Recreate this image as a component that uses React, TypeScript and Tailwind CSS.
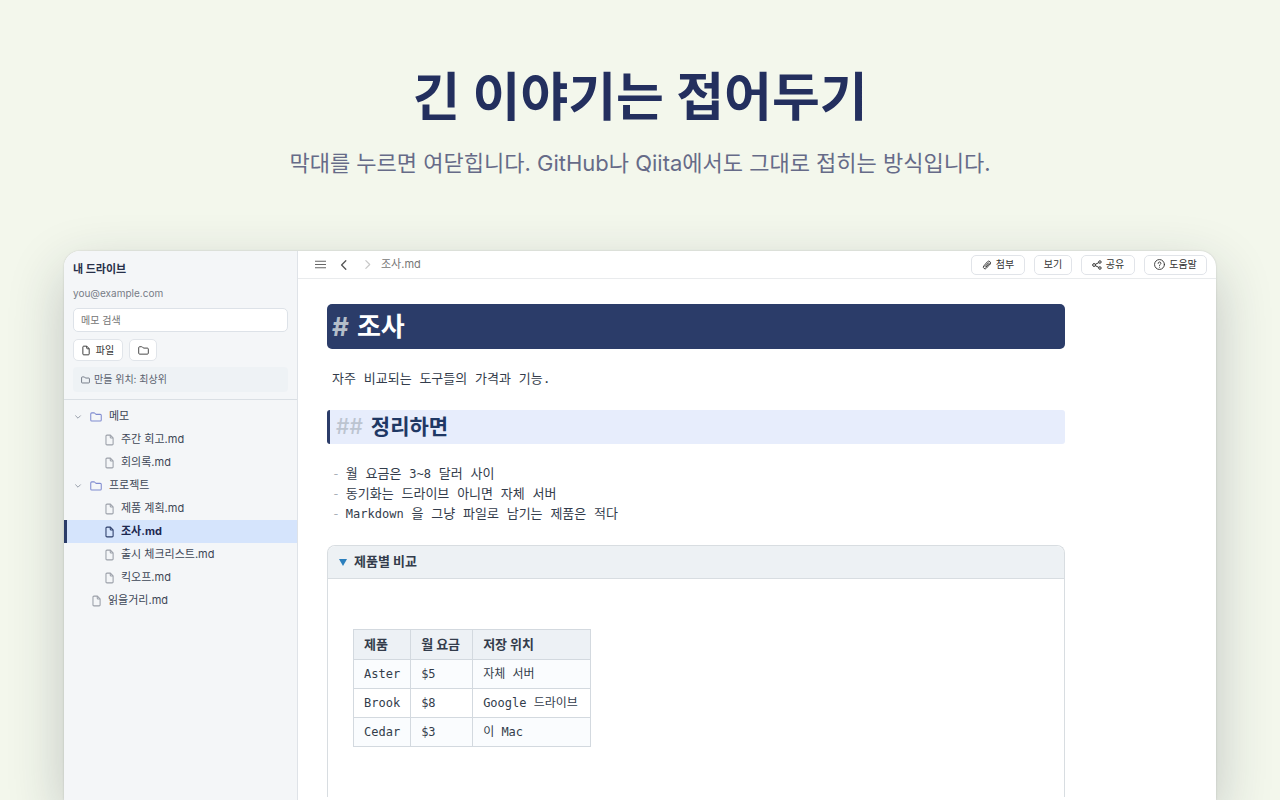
import type { ReactNode } from "react";
import clsx from "clsx";

const FileIcon = ({ className }: { className?: string }) => (
  <svg viewBox="0 0 12 16" className={className} fill="none" stroke="currentColor" strokeWidth="1.4" strokeLinejoin="round" aria-hidden="true">
    <path d="M2.6 1.5h4.6L10.8 5.2v8a1.3 1.3 0 0 1-1.3 1.3H2.6a1.3 1.3 0 0 1-1.3-1.3V2.8a1.3 1.3 0 0 1 1.3-1.3Z" />
    <path d="M7 1.7v2.5a1.2 1.2 0 0 0 1.2 1.2h2.4" />
  </svg>
);

const FolderIcon = ({ className }: { className?: string }) => (
  <svg viewBox="0 0 16 13" className={className} fill="none" stroke="currentColor" strokeWidth="1.4" strokeLinejoin="round" aria-hidden="true">
    <path d="M1 10.4V2.4A1.4 1.4 0 0 1 2.4 1h2.9c.5 0 .9.2 1.2.5l.9 1c.3.3.7.5 1.1.5h5.1A1.4 1.4 0 0 1 15 4.4v6a1.4 1.4 0 0 1-1.4 1.4H2.4A1.4 1.4 0 0 1 1 10.4Z" />
  </svg>
);

const Chevron = ({ d, className }: { d: string; className?: string }) => (
  <svg viewBox="0 0 10 10" className={className} fill="none" stroke="currentColor" strokeWidth="1.1" strokeLinecap="round" strokeLinejoin="round" aria-hidden="true">
    <path d={d} />
  </svg>
);

const ClipIcon = () => (
  <svg viewBox="0 0 12 12" className="size-2.5" fill="none" stroke="currentColor" strokeWidth="1.1" strokeLinecap="round" aria-hidden="true">
    <path d="M9.4 5.2 5.3 9.8a2 2 0 0 1-3.2-2.6L6.4 2.2a2.2 2.2 0 0 1 3.4 2.9" />
    <path d="M3.6 7.9 7.7 3.3M4.7 8.6l3.9-4.5" />
  </svg>
);

const ShareIcon = () => (
  <svg viewBox="0 0 12 12" className="size-2.5" fill="none" stroke="currentColor" strokeWidth="1.2" aria-hidden="true">
    <circle cx="2.5" cy="6" r="1.7" />
    <circle cx="9.5" cy="2.4" r="1.5" />
    <circle cx="9.5" cy="9.6" r="1.5" />
    <path d="M4 5.2 8.2 3.1M4 6.8l4.2 2.1" />
  </svg>
);

const HelpIcon = () => (
  <svg viewBox="0 0 12 12" className="size-[11px]" fill="none" stroke="currentColor" strokeWidth="1" strokeLinecap="round" aria-hidden="true">
    <circle cx="6" cy="6" r="5.4" />
    <path d="M4.5 4.8a1.5 1.5 0 1 1 2.3 1.2c-.5.3-.8.6-.8 1.1M6 8.9v.1" />
  </svg>
);

type Item = { name: string; kind: "folder" | "file"; depth: number; active?: boolean };

const tree: Item[] = [
  { name: "메모", kind: "folder", depth: 0 },
  { name: "주간 회고.md", kind: "file", depth: 1 },
  { name: "회의록.md", kind: "file", depth: 1 },
  { name: "프로젝트", kind: "folder", depth: 0 },
  { name: "제품 계획.md", kind: "file", depth: 1 },
  { name: "조사.md", kind: "file", depth: 1, active: true },
  { name: "출시 체크리스트.md", kind: "file", depth: 1 },
  { name: "킥오프.md", kind: "file", depth: 1 },
  { name: "읽을거리.md", kind: "file", depth: 0 },
];

const products = [
  { name: "Aster", price: "$5", place: "자체 서버" },
  { name: "Brook", price: "$8", place: "Google 드라이브" },
  { name: "Cedar", price: "$3", place: "이 Mac" },
];

function Latin({ children }: { children: ReactNode }) {
  return <span className="text-[12px]">{children}</span>;
}

const TreeRow = ({ name, kind, depth, active }: Item) => (
  <li>
    <a
      href="#"
      className={clsx(
        "flex h-[23px] items-center border-l-[3px] text-[11px]",
        active ? "border-[#2b3c69] bg-[#d5e4fc] font-bold text-[#1d2850]" : "border-transparent text-[#3d4656]",
        kind === "folder" ? "pl-[7px]" : depth === 1 ? "pl-[38px]" : "pl-[25px]"
      )}
    >
      {kind === "folder" ? (
        <>
          <Chevron d="M2 3.500 5 6.500l3-3" className="mr-2 size-2 text-[#8b93a1]" />
          <FolderIcon className="mr-[7px] h-[10px] w-3 text-[#7f8bd0]" />
        </>
      ) : (
        <FileIcon className={clsx("mr-[7px] h-3 w-[9px]", active ? "text-[#2b3c69]" : "text-[#9a9fa8]")} />
      )}
      {name}
    </a>
  </li>
);

const Sidebar = () => (
  <aside className="flex w-[234px] shrink-0 flex-col border-r border-[#dfe3e8] bg-[#f4f6f8]">
    <div className="border-b border-[#dadfe4] px-[9px] pt-[10px] pb-[7px]">
      <h2 className="text-[11px] leading-4 font-bold text-[#27304a]">내 드라이브</h2>
      <p className="mt-2 text-[10px] leading-4 text-[#777c86]">you@example.com</p>
      <input
        type="search"
        aria-label="메모 검색"
        placeholder="메모 검색"
        className="mt-[7px] block h-6 w-full rounded-[5px] border border-[#dde2e8] bg-white px-[7px] text-[10px] outline-none placeholder:text-[#757575]"
      />
      <div className="mt-[7px] flex gap-1.5">
        <button className="flex h-[22px] w-[50px] items-center justify-center gap-1.5 rounded-[5px] border border-[#e1e5ea] bg-white text-[10px] text-[#333]">
          <FileIcon className="h-[11px] w-2" />
          파일
        </button>
        <button aria-label="새 폴더" className="flex h-[22px] w-7 items-center justify-center rounded-[5px] border border-[#e1e5ea] bg-white text-[#444]">
          <FolderIcon className="h-[9px] w-[11px]" />
        </button>
      </div>
      <p className="mt-1.5 flex h-[25px] items-center gap-1 rounded bg-[#eef2f5] px-2 text-[10px] text-[#5b6270]">
        <FolderIcon className="h-2 w-[9px]" />
        만들 위치: 최상위
      </p>
    </div>
    <ul className="pt-[5px]">
      {tree.map((item) => (
        <TreeRow key={item.name} {...item} />
      ))}
    </ul>
  </aside>
);

const ToolButton = ({ icon, children, className }: { icon?: ReactNode; children: ReactNode; className: string }) => (
  <button className={clsx("flex h-5 items-center justify-center gap-1 rounded-[5px] border border-[#e1e4e9] bg-white text-[10px] text-[#333]", className)}>
    {icon}
    {children}
  </button>
);

const Toolbar = () => (
  <header className="flex h-7 shrink-0 items-center border-b border-[#e9ebed] pr-[9px] pl-[17px]">
    <button aria-label="메뉴" className="text-[#666]">
      <svg viewBox="0 0 11 9" className="h-[9px] w-[11px]" stroke="currentColor" strokeWidth="1.1">
        <path d="M0 1.200h11M0 4.500h11M0 7.800h11" />
      </svg>
    </button>
    <button aria-label="뒤로" className="ml-3 text-[#555]">
      <Chevron d="M6.500 1.500 3 5l3.500 3.500" className="size-3" />
    </button>
    <button aria-label="앞으로" className="ml-3 text-[#c8c8c8]">
      <Chevron d="M3.500 1.500 7 5 3.500 8.500" className="size-[11px]" />
    </button>
    <span className="ml-2 text-[11px] text-[#777]">조사.md</span>
    <div className="ml-auto flex gap-[9px]">
      <ToolButton icon={<ClipIcon />} className="w-[54px]">첨부</ToolButton>
      <ToolButton className="w-[38px]">보기</ToolButton>
      <ToolButton icon={<ShareIcon />} className="w-[54px]">공유</ToolButton>
      <ToolButton icon={<HelpIcon />} className="w-[63px]">도움말</ToolButton>
    </div>
  </header>
);

const Note = () => (
  <article className="flex min-h-0 w-full max-w-[767px] flex-1 flex-col pt-[25px] pb-[3px] pl-[29px] font-['DejaVu_Sans_Mono','Noto_Sans_CJK_KR',monospace] text-[13px] text-[#333c4b]">
    <h1 className="flex h-[45px] shrink-0 items-center gap-2 rounded-[5px] bg-[#2b3c69] px-[5px] font-['Inter','Noto_Sans_CJK_KR',sans-serif] text-[26px] font-bold text-white">
      <span className="text-[#b4bec9]">#</span>조사
    </h1>
    <p className="mt-5 px-[5px] leading-5">자주 비교되는 도구들의 가격과 기능.</p>
    <h2 className="mt-[21px] flex h-[34px] shrink-0 items-center gap-2 rounded-[3px] border-l-[3px] border-[#2b3c69] bg-[#e7edfc] px-1.5 font-['Inter','Noto_Sans_CJK_KR',sans-serif] text-[21px] font-bold text-[#1f3864]">
      <span className="font-medium text-[#bcc4d0]">##</span>정리하면
    </h2>
    <ul className="mt-5 px-[5px] leading-5 [&>li]:flex [&>li]:h-5 [&>li]:gap-1.5 [&>li]:before:text-[#a9b0b8] [&>li]:before:content-['-']">
      <li><span>월 요금은 <Latin>3~8</Latin> 달러 사이</span></li>
      <li><span>동기화는 드라이브 아니면 자체 서버</span></li>
      <li><span><Latin>Markdown</Latin> 을 그냥 파일로 남기는 제품은 적다</span></li>
    </ul>
    <details open className="mt-[21px] min-h-0 flex-1 rounded-t-lg border border-b-0 border-[#d8dde1] [&::details-content]:h-full">
      <summary className="flex h-8 items-center gap-[7px] rounded-t-lg bg-[#edf1f4] px-[11px] font-['Inter','Noto_Sans_CJK_KR',sans-serif] font-bold shadow-[0_1px_0_#d8dde1]">
        <svg viewBox="0 0 8 7" className="h-[7px] w-2 fill-[#2b7fbd]" aria-hidden="true">
          <path d="M0 0h8L4 7Z" />
        </svg>
        제품별 비교
      </summary>
      <table className="mt-[51px] ml-[25px] border-collapse text-left text-[12px] [&_td]:h-[29px] [&_td]:border [&_td]:border-[#d3d9df] [&_td]:px-2.5 [&_th]:h-[30px] [&_th]:border [&_th]:border-[#d3d9df] [&_th]:px-2.5">
        <thead className="bg-[#edf1f5] font-['Inter','Noto_Sans_CJK_KR',sans-serif] text-[13px]">
          <tr>
            <th className="w-[57px]">제품</th>
            <th className="w-[62px]">월 요금</th>
            <th className="w-[118px]">저장 위치</th>
          </tr>
        </thead>
        <tbody>
          {products.map((p) => (
            <tr key={p.name} className="odd:bg-[#fafcfe]">
              <td>{p.name}</td>
              <td>{p.price}</td>
              <td className="whitespace-nowrap">{p.place}</td>
            </tr>
          ))}
        </tbody>
      </table>
    </details>
  </article>
);

export default function App() {
  return (
    <div className="flex h-screen flex-col overflow-hidden bg-[#f3f7ec] font-['Inter','Noto_Sans_CJK_KR',sans-serif]">
      <div className="shrink-0 pt-[66px] text-center">
        <h1 className="text-[52px] leading-[64px] font-bold text-[#232f5e]">긴 이야기는 접어두기</h1>
        <p className="mt-[15px] text-[22px] leading-9 text-[#666b88]">
          막대를 누르면 여닫힙니다. GitHub나 Qiita에서도 그대로 접히는 방식입니다.
        </p>
      </div>
      <main className="mx-16 mt-[70px] flex min-h-0 flex-1 overflow-hidden rounded-t-2xl bg-white shadow-[0_0_2px_rgba(30,40,60,0.18),0_20px_56px_rgba(30,40,60,0.24)]">
        <Sidebar />
        <div className="flex min-w-0 flex-1 flex-col">
          <Toolbar />
          <Note />
        </div>
      </main>
    </div>
  );
}
